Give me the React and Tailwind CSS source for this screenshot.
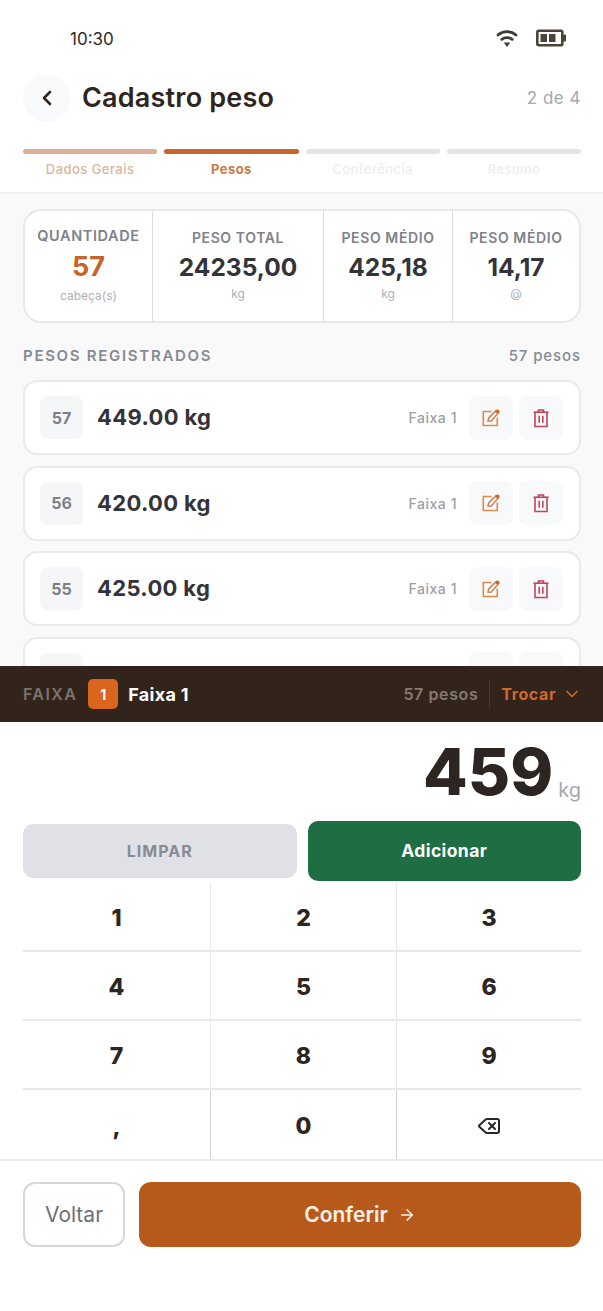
import { ChevronLeft, ChevronDown, ArrowRight, Delete } from 'lucide-react'

const mont = "font-['Inter',sans-serif]"

const stats = [
  { label: 'QUANTIDADE', value: '57', unit: 'cabeça(s)', w: 'w-[128px]', orange: true },
  { label: 'PESO TOTAL', value: '24235,00', unit: 'kg', w: 'w-[171px]' },
  { label: 'PESO MÉDIO', value: '425,18', unit: 'kg', w: 'w-[129px]' },
  { label: 'PESO MÉDIO', value: '14,17', unit: '@', w: 'flex-1' },
]

// a quarta linha fica cortada pela faixa, sem texto visivel
const pesos = [
  { id: 1, n: 57, kg: '449.00 kg', faixa: 'Faixa 1' },
  { id: 2, n: 56, kg: '420.00 kg', faixa: 'Faixa 1' },
  { id: 3, n: 55, kg: '425.00 kg', faixa: 'Faixa 1' },
  { id: 4, n: '', kg: '', faixa: '' },
]

const steps = [
  { label: 'Dados Gerais', bar: 'bg-[#dcae95]', text: 'text-[#dcb49e] font-medium' },
  { label: 'Pesos', bar: 'bg-[#c8652a]', text: 'text-[#c97a45] font-bold' },
  { label: 'Conferência', bar: 'bg-[#e2e4e9]', text: 'text-[#eceef1] font-medium' },
  { label: 'Resumo', bar: 'bg-[#e2e4e9]', text: 'text-[#eceef1] font-medium' },
]

const teclas = ['1', '2', '3', '4', '5', '6', '7', '8', '9', ',', '0', 'del']

function WifiIcon() {
  return (
    <svg width="22" height="20" viewBox="0 0 22 20" fill="none" stroke="#3f3a36" strokeWidth="2.8" strokeLinecap="round">
      <path d="M2 7C7 2.6 15 2.6 20 7" />
      <path d="M5.8 11.3C8.6 9 13.4 9 16.2 11.3" />
      <path d="M7.8 14.5h6.4L11 19z" fill="#3f3a36" stroke="none" />
    </svg>
  )
}

function BatteryIcon() {
  return (
    <svg width="30" height="20" viewBox="0 0 30 20" fill="none">
      <rect x="1.3" y="2.8" width="25" height="14.4" rx="1.2" stroke="#4a443d" strokeWidth="2.6" />
      <rect x="27" y="6.5" width="3" height="7" rx="1" fill="#4a443d" />
      <rect x="4.5" y="6" width="6.5" height="8" fill="#4a443d" />
      <rect x="13" y="6" width="6.5" height="8" fill="#4a443d" />
    </svg>
  )
}

function EditIcon() {
  return (
    <svg width="20" height="20" viewBox="0 0 20 20" fill="none" stroke="#dd8a4e" strokeWidth="1.6">
      <path d="M10.5 3.5H2.3v14h14V9.5" />
      <path d="M7 13l.7-3 7.4-7.4 2.3 2.3L10 13.3z" stroke="#d0804e" strokeWidth="1.5" />
      <circle cx="16.6" cy="3.4" r="2" fill="#cf6a30" stroke="none" />
    </svg>
  )
}

function TrashIcon() {
  return (
    <svg width="18" height="20" viewBox="0 0 18 20" fill="none" stroke="#c2445a" strokeWidth="1.6">
      <path d="M1.5 4.2h15" />
      <path d="M6.5 4.2V2h5v2.2" />
      <path d="M3 4.2v14.3h12V4.2" />
      <path d="M7.2 7.8v7M10.8 7.8v7" />
    </svg>
  )
}

function LinhaPeso({ p }) {
  return (
    <div className="h-[75px] shrink-0 rounded-[14px] border-2 border-[#e8eaed] bg-white flex items-center px-[15px]">
      <div className={`w-[43px] h-[43px] rounded-lg bg-[#f5f6f8] flex items-center justify-center text-[16px] font-bold text-[#7a8087] ${mont}`}>
        {p.n}
      </div>
      <span className={`ml-[14px] text-[22px] font-bold tracking-[0.35px] text-[#33343a] ${mont}`}>{p.kg}</span>
      <span className="ml-auto text-[14px] font-medium text-[#9a9ea6] tracking-[0.55px]">{p.faixa}</span>
      <button className="ml-[12px] w-[44px] h-[44px] rounded-lg bg-[#f8f9fa] flex items-center justify-center">{p.n && <EditIcon />}</button>
      <button className="ml-[6px] mr-[1px] w-[44px] h-[44px] rounded-lg bg-[#f8f9fa] flex items-center justify-center">{p.n && <TrashIcon />}</button>
    </div>
  )
}

export default function App() {
  return (
    <div className="w-[603px] h-[1311px] bg-white flex flex-col overflow-hidden font-['Inter',sans-serif]">
      {/* status bar */}
      <div className="h-[74px] shrink-0 flex items-start justify-between pl-[70px] pr-[37px] pt-[29px]">
        <span className="text-[17px] leading-[21px] text-[#2d2a28]">10:30</span>
        <div className="flex items-center gap-[18px] -mt-[1px]">
          <WifiIcon />
          <BatteryIcon />
        </div>
      </div>

      {/* header */}
      <div className="h-[48px] shrink-0 flex items-center pl-[23px] pr-[22px]">
        <div className="w-[47px] h-[47px] rounded-full bg-[#f8f9fa] flex items-center justify-center">
          <ChevronLeft size={24} strokeWidth={2.6} className="text-[#2d2521]" />
        </div>
        <h1 className="ml-[12px] mt-[1px] text-[27px] font-semibold tracking-[0.2px] text-[#2d2521]">Cadastro peso</h1>
        <span className="ml-auto mt-[1px] text-[17px] text-[#a5a8ae] tracking-[0.5px]">2 de 4</span>
      </div>

      {/* etapas */}
      <div className="h-[72px] shrink-0 pl-[23px] pr-[22px] pt-[27px] border-b-2 border-[#f1f2f4] grid grid-cols-4 gap-[7px]">
        {steps.map((s) => (
          <div key={s.label} className="flex flex-col items-center">
            <div className={`w-full h-[5px] rounded-full ${s.bar}`}></div>
            <span className={`mt-[7px] text-[13px] leading-[16px] tracking-[0.45px] ${s.text}`}>{s.label}</span>
          </div>
        ))}
      </div>

      {/* resumo e lista */}
      <div className="h-[472px] shrink-0 bg-[#f9f9fa] pl-[23px] pr-[22px] pt-[15px] overflow-hidden">
        <div className="h-[114px] rounded-[18px] border-2 border-[#e6e8eb] bg-white flex">
          {stats.map((s, i) => (
            <div key={i} className={`${s.w} ${i < 3 ? 'border-r border-[#dcdee2]' : ''} flex flex-col items-center ${i === 0 ? 'pt-[16px]' : 'pt-[18px]'}`}>
              <span className={`${i === 0 ? 'text-[14.5px]' : 'text-[14px]'} leading-[18px] font-semibold tracking-[0.6px] text-[#7d828b] whitespace-nowrap ${mont}`}>{s.label}</span>
              <span className={`${i === 0 ? 'mt-[6px] text-[27px]' : 'mt-[4px] text-[24.5px]'} leading-[32px] font-bold ${mont} ${s.orange ? 'text-[#c4642c]' : 'text-[#33343a]'}`}>{s.value}</span>
              <span className={`${i === 0 ? 'mt-[5px]' : 'mt-[3px]'} text-[12px] leading-[16px] text-[#aeb1b7]`}>{s.unit}</span>
            </div>
          ))}
        </div>

        <div className="mt-[23px] flex items-center justify-between h-[20px]">
          <span className="text-[15px] font-semibold text-[#858a93] tracking-[1.7px]">PESOS REGISTRADOS</span>
          <span className="text-[15px] font-medium text-[#858a93] tracking-[0.9px]">57 pesos</span>
        </div>

        <div className="mt-[14px] flex flex-col gap-[10.5px]">
          {pesos.map((p) => (
            <LinhaPeso key={p.id} p={p} />
          ))}
        </div>
      </div>

      {/* faixa */}
      <div className="h-[56px] shrink-0 bg-[#33241b] flex items-center pl-[23px] pr-[21px]">
        <span className={`text-[16px] font-semibold text-[#7c736d] tracking-[1.4px] ${mont}`}>FAIXA</span>
        <div className="ml-[11px] w-[30px] h-[30px] rounded-[5px] bg-[#d9651f] flex items-center justify-center text-[14px] font-bold text-white">1</div>
        <span className={`ml-[10px] text-[18px] font-bold tracking-[0.3px] text-white ${mont}`}>Faixa 1</span>
        <span className={`ml-auto text-[16px] font-semibold tracking-[0.6px] text-[#85796f] ${mont}`}>57 pesos</span>
        <div className="ml-[11px] w-px h-[28px] bg-[#4b3b30]"></div>
        <span className={`ml-[11px] text-[16px] font-bold text-[#d2682a] tracking-[0.6px] ${mont}`}>Trocar</span>
        <ChevronDown size={20} strokeWidth={2} className="ml-[6px] text-[#d2682a]" />
      </div>

      {/* visor */}
      <div className="h-[98px] shrink-0 flex items-start justify-end pl-[23px] pr-[22px] pt-[14px]">
        <span className={`text-[65px] leading-[72px] font-extrabold text-[#2d2521] ${mont}`}>459</span>
        <span className="ml-[5px] mt-[42px] text-[20px] leading-[24px] text-[#a5a8ae]">kg</span>
      </div>

      {/* acoes */}
      <div className="h-[62px] shrink-0 pl-[23px] pr-[22px] flex items-center gap-[11px]">
        <button className={`flex-1 h-[54px] rounded-[10px] bg-[#dfe1e6] text-[16px] font-bold text-[#868b95] tracking-[1px] ${mont}`}>LIMPAR</button>
        <button className={`flex-1 h-[60px] rounded-[10px] bg-[#1f6e43] text-[17.5px] font-bold tracking-[0.4px] text-white ${mont}`}>Adicionar</button>
      </div>

      {/* teclado */}
      <div className="mt-[1px] h-[278px] shrink-0 pl-[23px] pr-[22px] border-b-2 border-[#e8e9eb] grid grid-cols-[188px_186px_184px] grid-rows-4">
        {teclas.map((t, i) => (
          <button
            key={t}
            className={`flex items-center justify-center text-[23px] font-extrabold text-[#2d2521] ${mont} ${i % 3 < 2 ? 'border-r border-[#d0d2d6]' : ''} ${i < 9 ? 'border-b-2 border-[#e8e9eb]' : ''} ${t === ',' ? 'pt-[6px]' : 'pt-[3px]'}`}
          >
            {t === 'del' ? <Delete size={24} strokeWidth={2} className="text-[#2d2521]" /> : t}
          </button>
        ))}
      </div>

      {/* rodape */}
      <div className="shrink-0 pl-[23px] pr-[22px] pt-[21px] flex gap-[14px]">
        <button className="w-[102px] h-[65px] rounded-[12px] border-2 border-[#d5d7db] bg-white text-[21px] text-[#6b7079]">Voltar</button>
        <button className="flex-1 h-[65px] rounded-[12px] bg-[#b8591c] flex items-center justify-center gap-[10px] text-[21px] font-semibold text-[#fdf1e6]">
          Conferir
          <ArrowRight size={18} strokeWidth={2} />
        </button>
      </div>
    </div>
  )
}
